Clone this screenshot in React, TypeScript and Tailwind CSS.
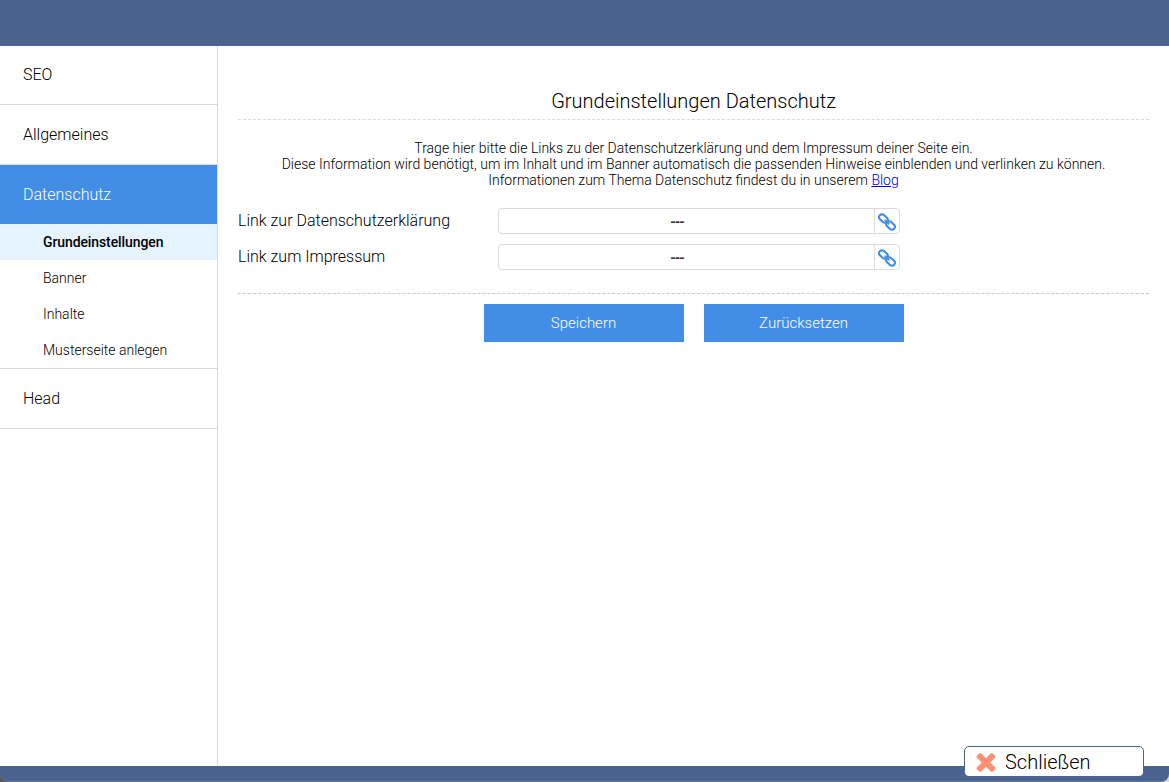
import React from "react";

function LinkIcon() {
  return (
    <svg viewBox="0 0 18 18" className="mr-0.5 mt-px h-[18px] w-[18px]" fill="none" stroke="#428ee6" strokeWidth="2.1">
      <rect x="-4.8" y="-2.9" width="9.6" height="5.8" rx="2.9" transform="translate(5.4 5.5) rotate(42)" />
      <rect x="-4.8" y="-2.9" width="9.6" height="5.8" rx="2.9" transform="translate(12.6 12.5) rotate(42)" />
      <path d="M7 7.2 11 10.8" strokeWidth="1.6" strokeLinecap="round" />
    </svg>
  );
}

function CloseIcon() {
  return (
    <svg viewBox="302 302 1188 1252" className="h-5 w-5 fill-[#ff9075]">
      <path d="M1490 1322q0 40-28 68l-136 136q-28 28-68 28t-68-28l-294-294-294 294q-28 28-68 28t-68-28l-136-136q-28-28-28-68t28-68l294-294-294-294q-28-28-28-68t28-68l136-136q28-28 68-28t68 28l294 294 294-294q28-28 68-28t68 28l136 136q28 28 28 68t-28 68l-294 294 294 294q28 28 28 68z" />
    </svg>
  );
}

function LinkField({ label }: { label: string }) {
  return (
    <div className="flex h-9 items-start">
      <label className="w-[260px] text-base leading-[26px]">{label}</label>
      <div className="flex h-[26px] w-[402px] rounded-[4px] border border-[#dadada]">
        <span className="flex-1 pr-[19px] text-center text-[14px] font-bold leading-[26px] tracking-[-1px] text-[#333]">---</span>
        <button className="-mr-px flex w-[26px] items-center justify-center border-l border-[#dadada]">
          <LinkIcon />
        </button>
      </div>
    </div>
  );
}

const subItems = ["Grundeinstellungen", "Banner", "Inhalte", "Musterseite anlegen"];

export default function App() {
  return (
    <div className="relative flex h-[782px] w-[1169px] flex-col overflow-hidden bg-white font-['Roboto',sans-serif] font-light text-black">
      <header className="h-[46px] shrink-0 bg-[#4a638f]" />
      <div className="flex min-h-0 flex-1">
        <nav className="w-[218px] shrink-0 border-r border-[#dadada] text-base">
          <div className="h-[59px] border-b border-[#dadada] pl-[23px] leading-[58px]">SEO</div>
          <div className="h-[60px] border-b border-[#dadada] pl-[23px] leading-[59px]">Allgemeines</div>
          <div className="h-[59px] bg-[#428ee6] pl-[23px] leading-[59px] text-white">Datenschutz</div>
          <ul className="border-b border-[#dadada] text-sm">
            {subItems.map((item, i) => (
              <li
                key={item}
                className={i === 0 ? "h-9 bg-[#e5f3fe] pl-[43px] font-medium leading-9 tracking-[-0.1px]" : "h-9 pl-[43px] leading-9"}
              >
                {item}
              </li>
            ))}
          </ul>
          <div className="h-[60px] border-b border-[#dadada] pl-[23px] leading-[59px]">Head</div>
        </nav>
        <main className="flex-1 px-5 pt-[43px]">
          <h1 className="h-[31px] border-b border-dashed border-[#dadada] text-center text-[20px] leading-6">
            Grundeinstellungen Datenschutz
          </h1>
          <p className="mt-5 text-center text-sm leading-4">
            Trage hier bitte die Links zu der Datenschutzerklärung und dem Impressum deiner Seite ein.
            <br />
            Diese Information wird benötigt, um im Inhalt und im Banner automatisch die passenden Hinweise einblenden und verlinken zu können.
            <br />
            Informationen zum Thema Datenschutz findest du in unserem{" "}
            <a href="#blog" className="text-[#0000ee] underline">Blog</a>
          </p>
          <div className="mt-5 h-[86px] border-b border-dashed border-[#c8c8c8]">
            <LinkField label="Link zur Datenschutzerklärung" />
            <LinkField label="Link zum Impressum" />
          </div>
          <div className="mt-[10px] flex justify-center gap-5 text-[15px] text-white">
            <button className="h-[38px] w-[200px] bg-[#428ee6]">Speichern</button>
            <button className="h-[38px] w-[200px] bg-[#428ee6]">Zurücksetzen</button>
          </div>
        </main>
      </div>
      <footer className="h-4 shrink-0 bg-linear-to-r from-[#5c5850] to-[#d8d8d8]">
        <div className="h-4 rounded-b-[8px] border-b border-[#5d76a3] bg-[#4a638f]" />
      </footer>
      <button className="absolute bottom-[5px] right-[25px] flex h-[31px] w-[180px] items-center gap-[9px] rounded-[5px] border border-[#4a638f] bg-white pl-[11px] text-[20px]">
        <CloseIcon />
        Schließen
      </button>
    </div>
  );
}
